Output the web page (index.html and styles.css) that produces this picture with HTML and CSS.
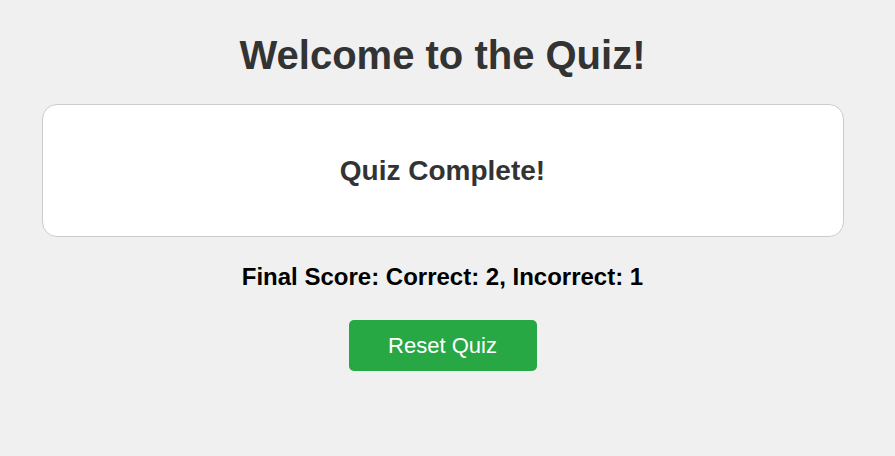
FILE: index.html
```html
<!DOCTYPE html>
<html>
<head>
<meta charset="utf-8">
<link rel="stylesheet" href="styles.css">
</head>
<body>
<div class="app">
  <h1 class="title">Welcome to the Quiz!</h1>
  <div class="card">
    <h2 class="card-title">Quiz Complete!</h2>
  </div>
  <p class="score">Final Score: Correct: 2, Incorrect: 1</p>
  <button class="reset">Reset Quiz</button>
</div>
</body>
</html>
```
FILE: styles.css
```css
body {
  margin: 0;
  background: #f0f0f0;
  font-family: "Liberation Sans", Arial, sans-serif;
}
.app {
  display: flex;
  flex-direction: column;
  align-items: center;
  padding-top: 32px;
  padding-right: 10px;
}
.title {
  margin: 0;
  font-size: 40px;
  line-height: 46px;
  color: #333;
}
.card {
  box-sizing: border-box;
  width: 802px;
  margin-top: 26px;
  height: 133px;
  background: #fff;
  border: 1px solid #ccc;
  border-radius: 15px;
  display: flex;
  align-items: center;
  justify-content: center;
}
.card-title {
  margin: 0;
  font-size: 28px;
  line-height: 32px;
  color: #333;
}
.score {
  margin: 26px 0 0;
  font-size: 24px;
  font-weight: bold;
  line-height: 28px;
  color: #000;
}
.reset {
  margin-top: 29px;
  width: 188px;
  height: 51px;
  border: none;
  border-radius: 5px;
  background: #28a745;
  color: #fff;
  font-family: "Liberation Sans", Arial, sans-serif;
  font-size: 22px;
}
```
